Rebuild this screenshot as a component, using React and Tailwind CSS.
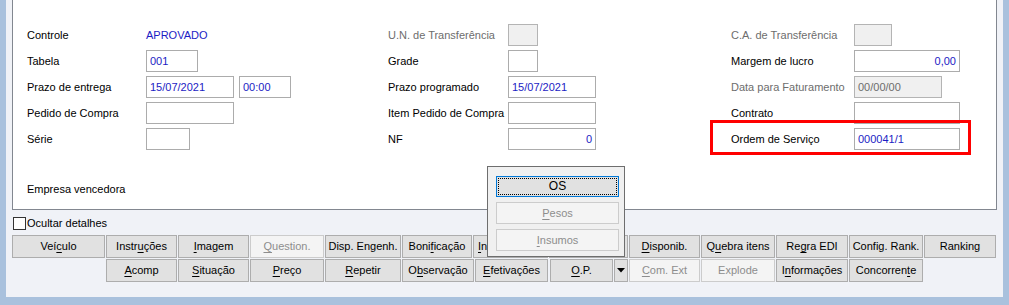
import React from 'react'

// Text with one underlined mnemonic letter, e.g. "Ima&gem"
const Mn = ({ t }) => {
  const i = t.indexOf('&')
  if (i < 0) return <>{t}</>
  return (
    <>
      {t.slice(0, i)}
      <span className="underline underline-offset-[2px]">{t[i + 1]}</span>
      {t.slice(i + 2)}
    </>
  )
}

const Field = ({ w, value = '', right, disabled }) => (
  <div
    className={`${w} h-[22px] border flex items-center px-[3px] ${right ? 'justify-end' : ''} ${
      disabled ? 'bg-[#f0f0f0] border-[#b4b4b4] text-[#6d6d6d]' : 'bg-white border-[#acacac] text-[#1c1cc4]'
    }`}
  >
    {value}
  </div>
)

const Label = ({ children, gray }) => (
  <span className={gray ? 'text-[#6d6d6d]' : 'text-black'}>{children}</span>
)

const Btn = ({ w, label, disabled, ml = 'ml-[1px]', left }) => (
  <div
    className={`${w} ${ml} h-[23px] border flex items-center whitespace-nowrap overflow-hidden ${
      left ? 'justify-start pl-[4px]' : 'justify-center'
    } ${disabled ? 'bg-[#f4f4f4] border-[#cccccc] text-[#8d8d8d]' : 'bg-[#e1e1e1] border-[#adadad] text-black'}`}
  >
    {label && <Mn t={label} />}
  </div>
)

const row1 = [
  { w: 'w-[93px]', label: 'Veí&culo', ml: 'ml-0' },
  { w: 'w-[71px]', label: 'Instr&uções' },
  { w: 'w-[71px]', label: '&Imagem' },
  { w: 'w-[74px]', label: '&Question.', disabled: true },
  { w: 'w-[76px]', label: 'Disp. Engenh.' },
  { w: 'w-[70px]', label: 'Boni&ficação' },
  { w: 'w-[75px]', label: '&In', left: true }, // covered by the popup
  { w: 'w-[79px]', label: '' }, // covered by the popup
  { w: 'w-[71px]', label: '&Disponib.' },
  { w: 'w-[74px]', label: 'Q&uebra itens' },
  { w: 'w-[72px]', label: 'Re&gra EDI' },
  { w: 'w-[74px]', label: 'Config. Rank.' },
  { w: 'w-[72px]', label: 'Ranking' },
]

const row2 = [
  { w: 'w-[71px]', label: '&Acomp', ml: 'ml-[94px]' },
  { w: 'w-[71px]', label: '&Situação' },
  { w: 'w-[74px]', label: '&Preço' },
  { w: 'w-[76px]', label: '&Repetir' },
  { w: 'w-[72px]', label: 'O&bservação' },
  { w: 'w-[73px]', label: '&Efetivações' },
  { w: 'w-[63px]', label: '&O.P.', ml: 'ml-[2px]' },
]

const row2b = [
  { w: 'w-[71px]', label: '&Com. Ext', disabled: true },
  { w: 'w-[74px]', label: 'Explode', disabled: true },
  { w: 'w-[72px]', label: 'I&nformações' },
  { w: 'w-[74px]', label: 'Concorren&te' },
]

export default function App() {
  return (
    <div className="relative w-[1009px] h-[305px] bg-[#a9c1dd] px-[6px] pb-[8px] font-['Liberation_Sans',Arial,sans-serif] text-[11px] leading-[13px] overflow-hidden">
      <div className="h-full bg-[#f0f2f7] px-[6px]">
        {/* Details panel */}
        <div className="relative h-[210px] bg-white border-l border-r border-b border-[#828790] pl-[14px] pt-[24px]">
          <div className="grid grid-cols-[361px_343px_1fr] gap-y-[4px]">
            {/* row 0 */}
            <div className="flex items-center h-[22px]">
              <div className="w-[119px]"><Label>Controle</Label></div>
              <span className="text-[#1c1cc4]">APROVADO</span>
            </div>
            <div className="flex items-center h-[22px]">
              <div className="w-[120px]"><Label gray>U.N. de Transferência</Label></div>
              <Field w="w-[30px]" disabled />
            </div>
            <div className="flex items-center h-[22px]">
              <div className="w-[123px]"><Label gray>C.A. de Transferência</Label></div>
              <Field w="w-[38px]" disabled />
            </div>

            {/* row 1 */}
            <div className="flex items-center h-[22px]">
              <div className="w-[119px]"><Label>Tabela</Label></div>
              <Field w="w-[52px]" value="001" />
            </div>
            <div className="flex items-center h-[22px]">
              <div className="w-[120px]"><Label>Grade</Label></div>
              <Field w="w-[30px]" />
            </div>
            <div className="flex items-center h-[22px]">
              <div className="w-[123px]"><Label>Margem de lucro</Label></div>
              <Field w="w-[106px]" value="0,00" right />
            </div>

            {/* row 2 */}
            <div className="flex items-center h-[22px]">
              <div className="w-[119px]"><Label>Prazo de entrega</Label></div>
              <Field w="w-[88px]" value="15/07/2021" />
              <div className="ml-[5px]"><Field w="w-[52px]" value="00:00" /></div>
            </div>
            <div className="flex items-center h-[22px]">
              <div className="w-[120px]"><Label>Prazo programado</Label></div>
              <Field w="w-[88px]" value="15/07/2021" />
            </div>
            <div className="flex items-center h-[22px]">
              <div className="w-[123px]"><Label gray>Data para Faturamento</Label></div>
              <Field w="w-[88px]" value="00/00/00" disabled />
            </div>

            {/* row 3 */}
            <div className="flex items-center h-[22px]">
              <div className="w-[119px]"><Label>Pedido de Compra</Label></div>
              <Field w="w-[88px]" />
            </div>
            <div className="flex items-center h-[22px]">
              <div className="w-[120px]"><Label>Item Pedido de Compra</Label></div>
              <Field w="w-[88px]" />
            </div>
            <div className="flex items-center h-[22px]">
              <div className="w-[123px]"><Label>Contrato</Label></div>
              <Field w="w-[106px]" />
            </div>

            {/* row 4 */}
            <div className="flex items-center h-[22px]">
              <div className="w-[119px]"><Label>Série</Label></div>
              <Field w="w-[44px]" />
            </div>
            <div className="flex items-center h-[22px]">
              <div className="w-[120px]"><Label>NF</Label></div>
              <Field w="w-[88px]" value="0" right />
            </div>
            <div className="flex items-center h-[22px]">
              <div className="w-[123px]"><Label>Ordem de Serviço</Label></div>
              <Field w="w-[106px]" value="000041/1" />
            </div>
          </div>

          <div className="mt-[33px]">Empresa vencedora</div>

          {/* red highlight around Ordem de Serviço */}
          <div className="absolute left-[697px] top-[120px] w-[261px] h-[35px] border-[3px] border-[#ff0000]" />
        </div>

        {/* Ocultar detalhes */}
        <div className="flex items-center mt-[7px] h-[13px]">
          <div className="ml-[1px] w-[13px] h-[13px] bg-white border border-[#333333]" />
          <span className="ml-[1px]">Ocultar detalhes</span>
        </div>

        {/* Buttons */}
        <div className="flex mt-[5px]">
          {row1.map((b, i) => (
            <Btn key={i} {...b} />
          ))}
        </div>
        <div className="flex mt-[1px]">
          {row2.map((b) => (
            <Btn key={b.label} {...b} />
          ))}
          <div className="ml-[1px] w-[14px] h-[23px] bg-[#e1e1e1] border border-[#adadad] flex items-center justify-center">
            <svg width="8" height="5" viewBox="0 0 8 5">
              <path d="M0 0h8L4 4.5z" fill="#000" />
            </svg>
          </div>
          {row2b.map((b) => (
            <Btn key={b.label} {...b} />
          ))}
        </div>
      </div>

      {/* Popup menu */}
      <div className="absolute left-[487px] top-[166px] w-[138px] h-[91px] bg-[#f0f0f0] border border-[#6e6e6e] pt-[9px] pl-[8px] flex flex-col gap-[5px]">
        <div className="w-[123px] h-[21px] bg-[#e1e1e1] border border-[#0078d7] p-[1px]">
          <div className="w-full h-full border border-dotted border-black flex items-center justify-center text-[12px]">
            OS
          </div>
        </div>
        <div className="w-[123px] h-[22px] bg-[#f4f4f4] border border-[#cccccc] text-[#8d8d8d] flex items-center justify-center">
          <Mn t="&Pesos" />
        </div>
        <div className="w-[123px] h-[22px] bg-[#f4f4f4] border border-[#cccccc] text-[#8d8d8d] flex items-center justify-center">
          <Mn t="&Insumos" />
        </div>
      </div>
    </div>
  )
}
